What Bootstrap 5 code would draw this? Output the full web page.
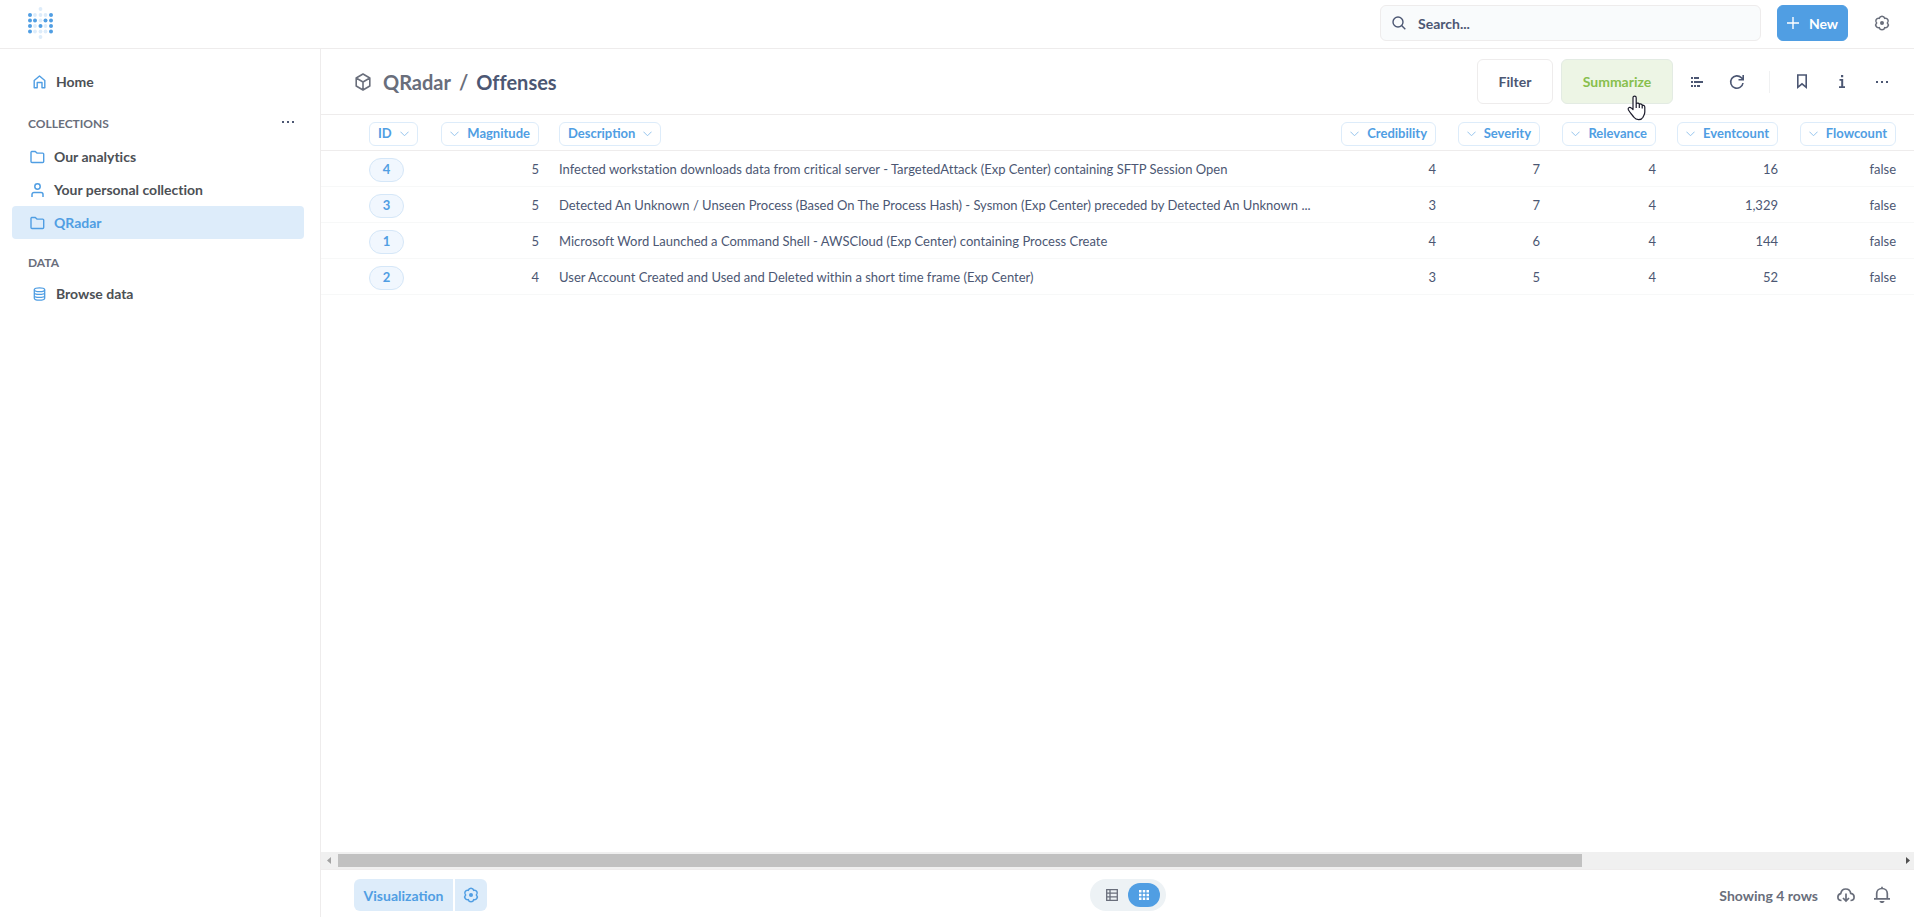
<!DOCTYPE html>
<html lang="en">
<head>
<meta charset="utf-8">
<meta name="viewport" content="width=device-width, initial-scale=1">
<title>Offenses · QRadar</title>
<link rel="stylesheet" href="https://cdn.jsdelivr.net/npm/bootstrap@5.3.0/dist/css/bootstrap.min.css">
<style>
:root { --brand: #509ee3; --brand-light: #ddecfa; --ink: #4c5773; --ink-mid: #696e7b; --line: #eeecec; }
body { font-family: Lato, "Noto Sans", sans-serif; font-size: 14px; font-weight: 700; color: var(--ink); font-variant-ligatures: none; }
svg { display: block; flex-shrink: 0; }
a { text-decoration: none; color: inherit; }
button { font-weight: 700; }
.topbar { height: 49px; border-bottom: 1px solid var(--line); padding: 0 20px 2px 28px; }
.search-box { width: 381px; height: 36px; border: 1px solid var(--line); border-radius: 6px; background: #f9fbfc; padding: 0 11px; gap: 12px; }
.search-box input { color: var(--ink); font-weight: 700; outline: 0; }
.search-box input::placeholder { color: var(--ink); opacity: 1; }
.btn-new { --bs-btn-font-size: 14px; --bs-btn-font-weight: 700; --bs-btn-color: #fff; --bs-btn-bg: var(--brand); --bs-btn-border-color: var(--brand); --bs-btn-border-radius: 6px; width: 71px; height: 36px; padding: 0; gap: 10px; margin-right: 22px; }
.icon-btn { border: 0; background: none; padding: 0; width: 24px; height: 24px; color: var(--ink); display: flex; align-items: center; justify-content: center; }
.topbar .icon-btn { color: var(--ink-mid); }
.side { width: 321px; border-right: 1px solid var(--line); padding: 16px 16px 0 12px; color: #4c5055; }
.side-link { height: 33px; display: flex; align-items: center; gap: 9px; padding-left: 18px; border-radius: 4px; }
.side-link svg { color: var(--brand); width: 15px; }
.side-link.top { padding-left: 20px; }
.side-link.active { background: var(--brand-light); color: var(--brand); }
.side-head { font-size: 12px; line-height: 16px; color: var(--ink-mid); margin: 0; font-weight: 700; }
.side-group { padding: 14px 4px 8px 16px; }
.side-group .icon-btn { height: 16px; }
.side-data { padding: 16px 0 6px 16px; }
.title-bar { height: 66px; border-bottom: 1px solid var(--line); padding: 0 20px 0 34px; }
.crumb { font-size: 20px; line-height: 24px; margin: 0; font-weight: 700; }
.crumb .dim, .crumb-icon { color: var(--ink-mid); }
.act { height: 45px; width: 76px; border: 1px solid var(--line); border-radius: 6px; background: #fff; color: var(--ink); padding: 0; position: relative; }
.act.sum { width: 112px; background: #edf5e5; border-color: #e3ebe3; color: #88bf4d; }
.tools { gap: 16px; margin-left: 12px; }
.tools .vr { height: 22px; align-self: center; color: #c4c6cc; margin: 0 4px; }
.cursor { position: absolute; left: 65px; top: 35px; z-index: 3; }
.grid-table { table-layout: fixed; width: 100%; border-collapse: separate; border-spacing: 0; font-size: 13px; }
.grid-table th, .grid-table td { height: 36px; padding: 2px 10px 0; white-space: nowrap; text-align: right; border-bottom: 1px solid #f7f8f8; }
.grid-table td { font-weight: 400; }
.grid-table th { border-bottom-color: var(--line); }
.grid-table .l { text-align: left; }
.grid-table td.l { overflow: hidden; text-overflow: ellipsis; }
.col-btn { display: inline-flex; align-items: center; gap: 8px; height: 24px; padding: 0 8px; border: 1px solid var(--brand-light); border-radius: 6px; background: #fff; color: var(--brand); vertical-align: middle; }
.col-btn svg { opacity: .6; width: 9px; height: 9px; }
.id-pill { display: inline-flex; align-items: center; justify-content: center; width: 35px; height: 24px; border: 1px solid #d5e7f8; border-radius: 12px; background: #f1f7fe; color: var(--brand); font-weight: 700; vertical-align: middle; }
.hscroll { height: 17px; background: #f0f0f0; }
.hscroll .thumb { height: 13px; background: #c1c1c1; }
.foot { height: 48px; border-top: 1px solid var(--line); padding: 3px 20px 0 33px; color: var(--ink-mid); }
.viz { height: 32px; border: 0; background: var(--brand-light); color: var(--brand); }
.viz.a { width: 99px; padding: 0; border-radius: 6px 0 0 6px; }
.viz.b { width: 32px; border-radius: 0 6px 6px 0; }
.switcher { width: 76px; height: 32px; border-radius: 16px; background: #edf2f5; padding: 0 6px; }
.switcher button { width: 32px; height: 24px; border: 0; border-radius: 12px; background: none; padding: 0; color: var(--ink-mid); display: flex; align-items: center; justify-content: center; }
.switcher .on { background: var(--brand); color: #fff; }
.third { flex: 1 1 0; }
.foot .icon-btn { color: var(--ink-mid); }
.foot .gap-12 { gap: 12px; }
.min-0 { min-width: 0; min-height: 0; }
</style>
</head>
<body class="vh-100 d-flex flex-column overflow-hidden">
<svg width="0" height="0" class="position-absolute" aria-hidden="true">
  <symbol id="gear" viewBox="0 0 16 16"><path d="M13.400 8A2.800 2.800 0 0 1 10.700 12.680A2.800 2.800 0 0 1 5.300 12.680A2.800 2.800 0 0 1 2.600 8A2.800 2.800 0 0 1 5.300 3.320A2.800 2.800 0 0 1 10.700 3.320A2.800 2.800 0 0 1 13.400 8z" fill="none" stroke="currentColor" stroke-width="1.500"/><circle cx="8" cy="8" r="2" fill="currentColor"/></symbol>
  <symbol id="chev" viewBox="0 0 10 10"><path d="M.5 3L5 7.500 9.500 3" fill="none" stroke="currentColor" stroke-width="1.100"/></symbol>
  <symbol id="folder" viewBox="0 0 15 14"><path d="M1.800 1.500h3.400l1.800 1.600h5.700a1 1 0 0 1 1 1v7.400a1 1 0 0 1-1 1H2a1 1 0 0 1-1-1v-9a.9.9 0 0 1 .8-1z" fill="none" stroke="currentColor" stroke-width="1.400"/></symbol>
  <symbol id="dots" viewBox="0 0 14 4"><path d="M1 1h2v2H1zM6 1h2v2H6zM11 1h2v2h-2z" fill="currentColor"/></symbol>
</svg>

<header class="topbar d-flex align-items-center">
  <a href="#" aria-label="Metabase home" class="me-auto">
    <svg width="26" height="34" viewBox="0 0 26 34">
      <g fill="#ddecfa"><circle cx="12.500" cy="3" r="1.900"/><circle cx="7" cy="9" r="1.900"/><circle cx="12.500" cy="9" r="1.900"/><circle cx="17.500" cy="9" r="1.900"/><circle cx="12.500" cy="14.500" r="1.900"/><circle cx="7" cy="20" r="1.900"/><circle cx="17.500" cy="20" r="1.900"/><circle cx="7" cy="25.500" r="1.900"/><circle cx="12.500" cy="25.500" r="1.900"/><circle cx="17.500" cy="25.500" r="1.900"/><circle cx="12.500" cy="31" r="1.900"/></g>
      <g fill="#509ee3"><circle cx="2" cy="9" r="2"/><circle cx="23" cy="9" r="2"/><circle cx="2" cy="14.500" r="2"/><circle cx="7" cy="14.500" r="2"/><circle cx="17.500" cy="14.500" r="2"/><circle cx="23" cy="14.500" r="2"/><circle cx="2" cy="20" r="2"/><circle cx="12.500" cy="20" r="2"/><circle cx="23" cy="20" r="2"/><circle cx="2" cy="25.500" r="2"/><circle cx="23" cy="25.500" r="2"/></g>
    </svg>
  </a>
  <label class="search-box d-flex align-items-center me-3">
    <svg width="14" height="14" viewBox="0 0 14 14" fill="none" stroke="currentColor" stroke-width="1.400"><circle cx="6" cy="6" r="5"/><path d="M9.600 9.600l3.700 3.700"/></svg>
    <input type="text" class="border-0 bg-transparent p-0 flex-grow-1" placeholder="Search..." aria-label="Search">
  </label>
  <button class="btn btn-new d-flex align-items-center justify-content-center" type="button">
    <svg width="12" height="12" viewBox="0 0 12 12"><path d="M6 0v12M0 6h12" stroke="currentColor" stroke-width="1.400"/></svg>New
  </button>
  <button class="icon-btn" type="button" aria-label="Settings"><svg width="16" height="16"><use href="#gear"/></svg></button>
</header>

<div class="d-flex flex-grow-1 min-0">
  <nav class="side flex-shrink-0">
    <a href="#" class="side-link top"><svg height="14" viewBox="0 0 15 14" fill="none" stroke="currentColor" stroke-width="1.400"><path d="M2.200 5.500L7.500 1l5.300 4.500v7.300H10V7.500H5.200v5.300h-3z" stroke-linejoin="round"/></svg>Home</a>
    <div class="side-group d-flex align-items-center"><h2 class="side-head me-auto mt-1">COLLECTIONS</h2><button type="button" class="icon-btn" aria-label="Collection options"><svg width="14" height="4"><use href="#dots"/></svg></button></div>
    <a href="#" class="side-link"><svg height="14"><use href="#folder"/></svg>Our analytics</a>
    <a href="#" class="side-link"><svg height="14" viewBox="0 0 15 14" fill="none" stroke="currentColor" stroke-width="1.500"><circle cx="7.500" cy="3.500" r="2.700"/><path d="M2 14v-2.500a2 2 0 0 1 2-2h7a2 2 0 0 1 2 2V14"/></svg>Your personal collection</a>
    <a href="#" class="side-link active"><svg height="14"><use href="#folder"/></svg>QRadar</a>
    <h2 class="side-head side-data">DATA</h2>
    <a href="#" class="side-link top"><svg height="14" viewBox="0 0 15 14" fill="none" stroke="currentColor" stroke-width="1.300"><ellipse cx="7.500" cy="2.700" rx="5.200" ry="1.900"/><path d="M2.300 2.700v8.600c0 1.100 2.300 1.900 5.200 1.900s5.200-.8 5.200-1.900V2.700M2.300 5.700c0 1 2.300 1.700 5.200 1.700s5.200-.7 5.200-1.700M2.300 8.700c0 1 2.300 1.700 5.200 1.700s5.200-.7 5.200-1.700"/></svg>Browse data</a>
  </nav>

  <main class="d-flex flex-column flex-grow-1 min-0">
    <div class="title-bar d-flex align-items-center">
      <svg class="crumb-icon" width="16" height="18" viewBox="0 0 16 18" fill="none" stroke="currentColor" stroke-width="1.600" stroke-linejoin="round"><path d="M8 1l6.800 4v8L8 17l-6.800-4V5zM1.200 5L8 9l6.800-4M8 9v8"/></svg>
      <h1 class="crumb ms-2 ps-1 me-auto d-flex gap-2"><a href="#" class="dim">QRadar</a><span class="dim">/</span><span>Offenses</span></h1>
      <button type="button" class="act me-2">Filter</button>
      <button type="button" class="act sum">Summarize
        <svg class="cursor" width="20" height="26" viewBox="0 0 20 26"><path d="M6 14.500V2.800C6 .600 9.200.600 9.200 2.800V8.500c1.200-.8 2.800-.4 3.100.7 1.200-.6 2.600-.1 2.900 1 1.300-.3 2.600.5 2.600 2V17c0 2.300-1 3.300-1.800 5.200-1.600 3.200-7 3-8.800.3C5.500 20.300 3.500 18.500 1.300 14.800c-.7-2.300 1.600-3.300 3.200-1.700zM9.200 8.500V13M12.300 9.300V13M15.200 10.300v3.200" fill="#fff" stroke="#1b1b2b" stroke-width="1.200" stroke-linejoin="round"/></svg>
      </button>
      <div class="tools d-flex">
        <button type="button" class="icon-btn" aria-label="Editor"><svg width="12" height="10" viewBox="0 0 12 10"><path d="M0 0h2v2H0zM3 0h5v2H3zM0 4h2v2H0zM3 4h9v2H3zM0 8h2v2H0zM3 8h2v2H3zM6 8h3v2H6z" fill="currentColor"/></svg></button>
        <button type="button" class="icon-btn" aria-label="Refresh"><svg width="16" height="16" viewBox="0 0 16 16" fill="none" stroke="currentColor" stroke-width="1.600"><path d="M14 9a6.200 6.200 0 1 1-1.600-5.200L14 5.500M14.200 1v4.700H9.500"/></svg></button>
        <span class="vr"></span>
        <button type="button" class="icon-btn" aria-label="Bookmark"><svg width="12" height="15" viewBox="0 0 12 15"><path d="M1.800 1h8.400v12.300L6 9.800l-4.200 3.500z" fill="none" stroke="currentColor" stroke-width="1.600"/></svg></button>
        <button type="button" class="icon-btn" aria-label="Info"><svg width="6" height="13" viewBox="0 0 6 13"><path d="M2 0h2.200v2.200H2zM.5 4h3.700v7.200H6V13H0v-1.800h2.200V5.700H.5z" fill="currentColor"/></svg></button>
      </div>
      <button type="button" class="icon-btn ms-3" aria-label="More"><svg width="14" height="4"><use href="#dots"/></svg></button>
    </div>

    <div class="flex-grow-1 overflow-hidden">
      <table class="grid-table">
        <colgroup><col style="width:38px"><col style="width:70px"><col style="width:120px"><col><col style="width:117px"><col style="width:104px"><col style="width:116px"><col style="width:122px"><col style="width:118px"><col style="width:8px"></colgroup>
        <thead><tr>
          <th></th>
          <th class="l"><button type="button" class="col-btn">ID<svg><use href="#chev"/></svg></button></th>
          <th><button type="button" class="col-btn"><svg><use href="#chev"/></svg>Magnitude</button></th>
          <th class="l"><button type="button" class="col-btn">Description<svg><use href="#chev"/></svg></button></th>
          <th><button type="button" class="col-btn"><svg><use href="#chev"/></svg>Credibility</button></th>
          <th><button type="button" class="col-btn"><svg><use href="#chev"/></svg>Severity</button></th>
          <th><button type="button" class="col-btn"><svg><use href="#chev"/></svg>Relevance</button></th>
          <th><button type="button" class="col-btn"><svg><use href="#chev"/></svg>Eventcount</button></th>
          <th><button type="button" class="col-btn"><svg><use href="#chev"/></svg>Flowcount</button></th>
          <th class="p-0"></th>
        </tr></thead>
        <tbody>
          <tr><td></td><td class="l"><a href="#" class="id-pill">4</a></td><td>5</td><td class="l">Infected workstation downloads data from critical server - TargetedAttack (Exp Center) containing SFTP Session Open</td><td>4</td><td>7</td><td>4</td><td>16</td><td>false</td><td class="p-0"></td></tr>
          <tr><td></td><td class="l"><a href="#" class="id-pill">3</a></td><td>5</td><td class="l">Detected An Unknown / Unseen Process (Based On The Process Hash) - Sysmon (Exp Center) preceded by Detected An Unknown ...</td><td>3</td><td>7</td><td>4</td><td>1,329</td><td>false</td><td class="p-0"></td></tr>
          <tr><td></td><td class="l"><a href="#" class="id-pill">1</a></td><td>5</td><td class="l">Microsoft Word Launched a Command Shell - AWSCloud (Exp Center) containing Process Create</td><td>4</td><td>6</td><td>4</td><td>144</td><td>false</td><td class="p-0"></td></tr>
          <tr><td></td><td class="l"><a href="#" class="id-pill">2</a></td><td>4</td><td class="l">User Account Created and Used and Deleted within a short time frame (Exp Center)</td><td>3</td><td>5</td><td>4</td><td>52</td><td>false</td><td class="p-0"></td></tr>
        </tbody>
      </table>
    </div>

    <div class="hscroll d-flex align-items-center flex-shrink-0" aria-hidden="true">
      <svg width="17" height="9" viewBox="0 0 17 9"><path d="M10 1v7L6 4.500z" fill="#a3a3a3"/></svg>
      <div class="flex-grow-1"><div class="thumb" style="width:79.800%"></div></div>
      <svg width="17" height="9" viewBox="0 0 17 9"><path d="M9 1v7l4-3.500z" fill="#505050"/></svg>
    </div>

    <footer class="foot d-flex align-items-center flex-shrink-0">
      <div class="third d-flex" style="gap:2px">
        <button type="button" class="viz a">Visualization</button>
        <button type="button" class="viz b d-flex align-items-center justify-content-center p-0" aria-label="Visualization settings"><svg width="16" height="16"><use href="#gear"/></svg></button>
      </div>
      <div class="switcher d-flex align-items-center ms-2">
        <button type="button" aria-label="Table view"><svg width="12" height="12" viewBox="0 0 12 12" fill="none" stroke="currentColor" stroke-width="1.300"><path d="M.700.700h10.600v10.600H.700zM.700 4.200h10.600M.700 7.800h10.600M4 .700v10.600"/></svg></button>
        <button type="button" class="on" aria-label="Grid view"><svg width="10" height="10" viewBox="0 0 10 10"><path d="M0 0h2.500v2.500H0zM3.750 0h2.500v2.500h-2.500zM7.500 0H10v2.500H7.500zM0 3.750h2.500v2.500H0zM3.750 3.750h2.500v2.500h-2.500zM7.500 3.750H10v2.500H7.500zM0 7.500h2.500V10H0zM3.750 7.500h2.500V10h-2.500zM7.500 7.500H10V10H7.500z" fill="currentColor"/></svg></button>
      </div>
      <div class="third d-flex align-items-center justify-content-end gap-12">
        <span>Showing 4 rows</span>
        <button type="button" class="icon-btn ms-1" aria-label="Download"><svg width="18" height="15" viewBox="0 0 18 15" fill="none" stroke="currentColor" stroke-width="1.700"><path d="M4.500 12.500C2.200 12.500.9 11 .9 9c0-1.600 1-3 2.800-3.400C4.200 3 6 1 8.700 1s4.700 2 5 4.400c2.200.3 3.400 1.700 3.400 3.600 0 2-1.400 3.500-3.600 3.500M9 5.500v7M6 10l3 3 3-3"/></svg></button>
        <button type="button" class="icon-btn" aria-label="Alerts"><svg width="18" height="18" viewBox="0 0 18 18"><path d="M1 12.800h16M3.700 12.500V7.500C3.700 4.500 6 2.500 9 2.500s5.300 2 5.300 5v5M9 .800v2" fill="none" stroke="currentColor" stroke-width="1.700"/><path d="M6.500 15h5c-.3 1.500-1.200 2-2.500 2s-2.200-.5-2.500-2z" fill="currentColor"/></svg></button>
      </div>
    </footer>
  </main>
</div>
<script src="https://cdn.jsdelivr.net/npm/bootstrap@5.3.0/dist/js/bootstrap.bundle.min.js"></script>
</body>
</html>
